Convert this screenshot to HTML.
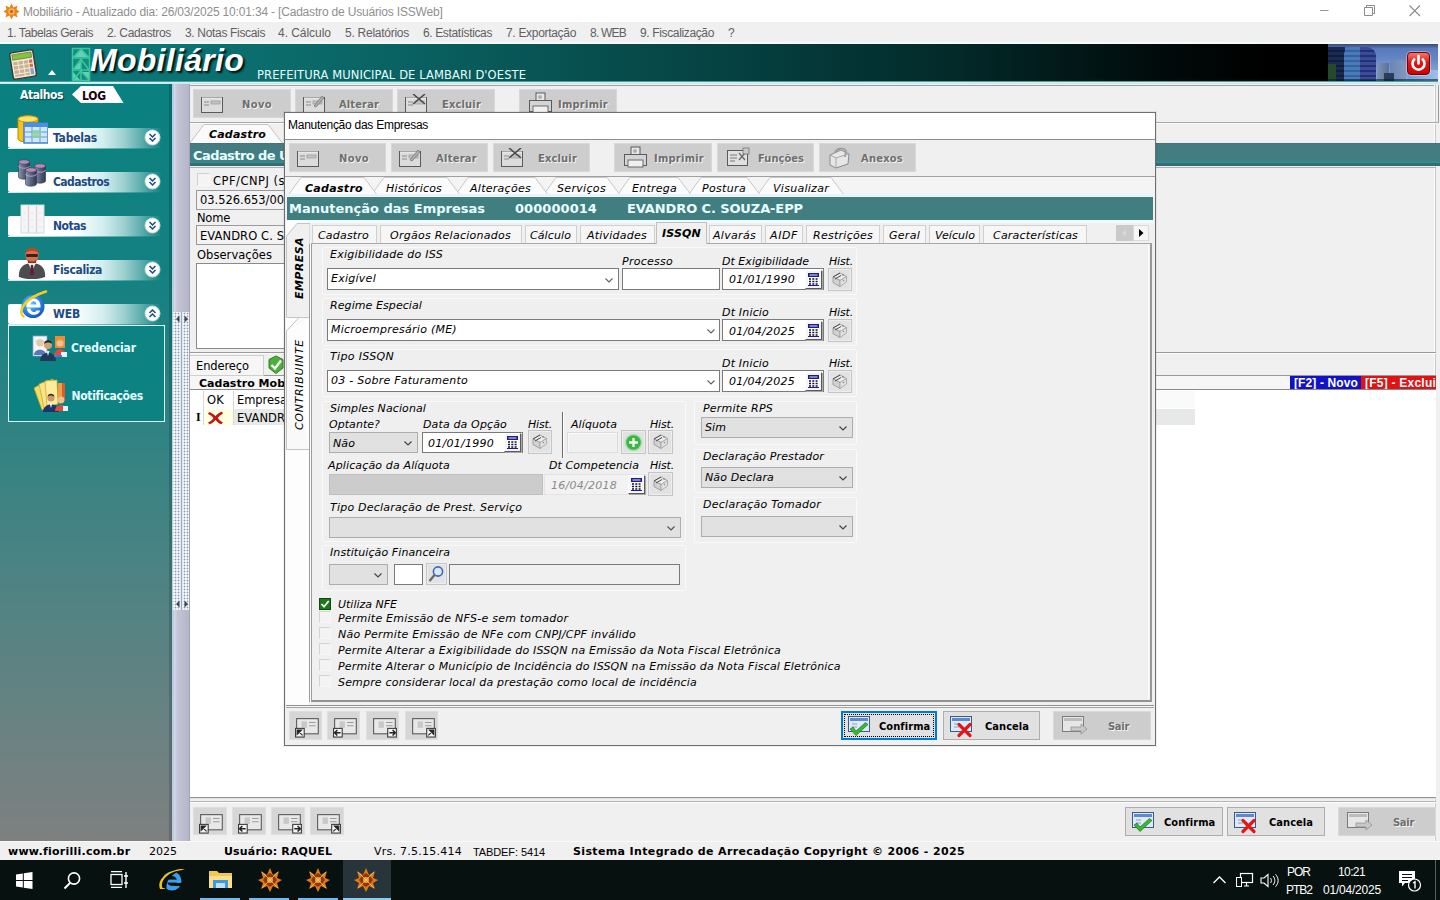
<!DOCTYPE html>
<html lang="pt-BR">
<head>
<meta charset="utf-8">
<title>Mobiliário</title>
<style>
*{box-sizing:border-box;margin:0;padding:0}
html,body{width:1440px;height:900px;overflow:hidden;background:#f0f0f0}
body{position:relative;font-family:"DejaVu Sans","Liberation Sans",sans-serif;font-size:11px;color:#000}
div,svg{position:absolute}
.t{white-space:nowrap;line-height:16px;height:16px}
.ui{font-family:"Liberation Sans",sans-serif;font-size:12px}
.i{font-style:italic}
.b{font-weight:bold}
.cb{font-family:"DejaVu Sans Condensed","DejaVu Sans",sans-serif;font-weight:bold}
.w{color:#fff}
.g{color:#6d6d6d}
.teal{background:#417e80}
.hd{color:#e8ffff;font-weight:bold;font-size:13px}
.tbtn{background:#cdcdcd;border:1px solid #d8d8d8}
.tl{color:#6e6e6e;text-shadow:1px 1px 0 #f4f4f4}
.in{background:#fff;border:1px solid #7a7a7a}
.ing{background:#e1e1e1;border:1px solid #adadad}
.ind{background:#cccccc;border:1px solid #bfbfbf}
.inf{background:#f0f0f0;border:1px solid #7a7a7a}
.hb{background:#e2e2e2;border:1px solid #c4c4c4;box-shadow:inset 0 0 0 1px #ededed}
.tab{background:#f6f6f6;border:1px solid #d0d0d0;border-bottom:none}
.nb{background:#d6d6d6;border:1px solid #dedede}

</style>
</head>
<body>
<div style="left:0px;top:0px;width:1440px;height:22px;background:#fff"></div><svg style="left:3px;top:3px;" width="17" height="17" viewBox="0 0 17 17"><g transform="translate(8.5 8.5)"><path d="M0-8 2-4 6-6 5-2 8 0 5 2 6 6 2 4 0 8-2 4-6 6-5 2-8 0-5-2-6-6-2-4Z" fill="#e8851a"/><circle r="3.2" fill="#f6b45a"/><circle r="1.5" fill="#c65a10"/></g></svg><div class="t ui" style="letter-spacing:-0.18px;left:23px;top:4px;color:#8f8f8f">Mobiliário - Atualizado dia: 26/03/2025 10:01:34 - [Cadastro de Usuários ISSWeb]</div><svg style="left:1318px;top:4px;" width="14" height="14" viewBox="0 0 14 14"><path d="M2 6.5H10.5" stroke="#9a9a9a" stroke-width="1"/></svg><svg style="left:1362px;top:2px;" width="16" height="16" viewBox="0 0 16 16"><path d="M2.5 5.5H10.5V13.5H2.5Z M4.5 5.5V3.5H12.5V11.5H10.5" fill="none" stroke="#8a8a8a" stroke-width="1"/></svg><svg style="left:1407px;top:3px;" width="16" height="16" viewBox="0 0 16 16"><path d="M2.5 2.5L13 13M13 2.5L2.5 13" stroke="#8a8a8a" stroke-width="1.1"/></svg><div style="left:0px;top:22px;width:1440px;height:20px;background:#f1f0f0"></div>
<div class="t ui" style="letter-spacing:-0.42px;left:7px;top:25px;color:#606060">1. Tabelas Gerais</div>
<div class="t ui" style="letter-spacing:-0.34px;left:107px;top:25px;color:#606060">2. Cadastros</div>
<div class="t ui" style="letter-spacing:-0.33px;left:185px;top:25px;color:#606060">3. Notas Fiscais</div>
<div class="t ui" style="letter-spacing:-0.04px;left:278px;top:25px;color:#606060">4. Cálculo</div>
<div class="t ui" style="letter-spacing:-0.26px;left:345px;top:25px;color:#606060">5. Relatórios</div>
<div class="t ui" style="letter-spacing:-0.38px;left:423px;top:25px;color:#606060">6. Estatísticas</div>
<div class="t ui" style="letter-spacing:-0.31px;left:506px;top:25px;color:#606060">7. Exportação</div>
<div class="t ui" style="letter-spacing:-0.78px;left:590px;top:25px;color:#606060">8. WEB</div>
<div class="t ui" style="letter-spacing:-0.36px;left:640px;top:25px;color:#606060">9. Fiscalização</div>
<div class="t ui" style="letter-spacing:-1.69px;left:728px;top:25px;color:#606060">?</div>
<div style="left:0px;top:44px;width:1440px;height:38px;background:linear-gradient(90deg,#0d7f7f 0px,#0c7777 120px,#0a6262 400px,#064444 700px,#032a2a 950px,#010c0c 1150px,#000 1260px)"></div>
<div style="left:0px;top:42px;width:1440px;height:2px;background:#f4fbfa"></div>
<div style="left:0px;top:81px;width:1440px;height:3px;background:linear-gradient(#0a5c5c,#bfeeee 40%,#e6ffff 70%,#9cd4d4)"></div>
<div style="left:1438px;top:43px;width:2px;height:39px;background:#f4f4f4"></div>
<div style="left:1328px;top:44px;width:110px;height:37px;background:linear-gradient(180deg,#5473b4 0%,#6486c6 40%,#7d9fd6 70%,#88a8d8 100%);overflow:hidden"><div style="left:0;top:0;width:110px;height:4px;background:linear-gradient(#3a4a78,#5473b4)"></div>
<div style="left:0;top:3px;width:17px;height:34px;background:repeating-linear-gradient(180deg,#1a2a52 0 3px,#101c3c 3px 5px)"></div>
<div style="left:0;top:20px;width:8px;height:17px;background:#244a2c"></div>
<div style="left:16px;top:3px;width:16px;height:34px;border-radius:7px 0 0 0;background:repeating-linear-gradient(180deg,#4a7ab8 0 3px,#34629e 3px 5px)"></div>
<div style="left:32px;top:3px;width:16px;height:34px;border-radius:0 9px 0 0;background:repeating-linear-gradient(180deg,#3a4c98 0 3px,#242f78 3px 5px)"></div>
<div style="left:49px;top:19px;width:12px;height:18px;background:linear-gradient(90deg,#7f93b4,#5a7096)"></div>
<div style="left:62px;top:16px;width:16px;height:21px;background:linear-gradient(90deg,#6a86b2,#8098be);border-radius:4px 4px 0 0"></div>
<div style="left:56px;top:29px;width:10px;height:8px;background:#2a3c5c"></div>
<div style="left:80px;top:26px;width:30px;height:11px;background:linear-gradient(90deg,#6fa0d4,#9cc0ea)"></div>
<div style="left:0;top:35px;width:110px;height:2px;background:rgba(10,20,40,.55)"></div></div>
<div style="left:1407px;top:52px;width:23px;height:23px;background:linear-gradient(#f47868,#e01818 45%,#d00000);border:1px solid #7a0000;border-radius:4px;box-shadow:0 0 0 1px rgba(255,255,255,.35)"></div><svg style="left:1407px;top:52px;" width="23" height="23" viewBox="0 0 23 23"><path d="M7.2 7.5A6 6 0 1 0 15.8 7.5" fill="none" stroke="#fff" stroke-width="2.6" stroke-linecap="round"/><path d="M11.5 4V11.5" stroke="#fff" stroke-width="2.6" stroke-linecap="round"/></svg><svg style="left:7px;top:48px;" width="32" height="33" viewBox="0 0 30 31"><g transform="rotate(-9 15 15)"><rect x="4" y="3" width="22" height="25" rx="2" fill="#f2ead8" stroke="#3a3a30" stroke-width="1.3"/><rect x="6" y="5" width="18" height="5" fill="#8ac040" stroke="#50702a" stroke-width=".6"/><g fill="#c8b090"><rect x="6" y="12" width="4" height="3"/><rect x="11" y="12" width="4" height="3"/><rect x="16" y="12" width="4" height="3"/><rect x="21" y="12" width="3" height="3" fill="#d07050"/><rect x="6" y="16" width="4" height="3"/><rect x="11" y="16" width="4" height="3"/><rect x="16" y="16" width="4" height="3"/><rect x="21" y="16" width="3" height="3" fill="#d07050"/><rect x="6" y="20" width="4" height="3"/><rect x="11" y="20" width="4" height="3"/><rect x="16" y="20" width="4" height="3"/><rect x="21" y="20" width="3" height="6" fill="#8aa0d0"/><rect x="6" y="24" width="9" height="2"/><rect x="16" y="24" width="4" height="2"/></g></g></svg><svg style="left:47px;top:69px;" width="10" height="7" viewBox="0 0 10 7"><path d="M1 6L5 1L9 6Z" fill="#fff"/></svg><svg style="left:71px;top:47px;" width="20" height="35" viewBox="0 0 20 35"><rect x="1" y="1" width="18" height="33" fill="#1c9a80" opacity=".55"/><g fill="#7fe8c8" opacity=".75"><path d="M2 10L10 2L18 10Z"/><path d="M2 22L10 14V22Z"/><path d="M18 33L10 25H18Z"/><path d="M2 33V25L9 33Z"/></g><g fill="none" stroke="#38c8a0" stroke-width="1.5"><rect x="1.5" y="1.5" width="17" height="32"/><path d="M2 11H18M2 23H18"/><path d="M2 11L10 2L18 11M2 23L10 12L18 23M2 33L10 24L18 33M10 12V33"/></g></svg><div class="t ui b i" style="letter-spacing:0.29px;left:90px;top:42px;font-size:32px;line-height:36px;height:36px;color:#fff;text-shadow:2px 2px 2px rgba(0,0,0,.85)">Mobiliário</div>
<div class="t" style="letter-spacing:0.11px;left:257px;top:67px;color:#e6ffff;font-size:11.5px">PREFEITURA MUNICIPAL DE LAMBARI D'OESTE</div>
<div style="left:0px;top:84px;width:172px;height:758px;background:linear-gradient(180deg,#0a8080 0%,#148181 25%,#2f8383 45%,#4d8383 65%,#6a8282 85%,#7f8080 100%)"></div>
<div class="t cb" style="letter-spacing:-0.43px;left:20px;top:87px;font-size:12px;color:#fff;text-shadow:1px 1px 1px #044">Atalhos</div><svg style="left:71px;top:85px;" width="54" height="19" viewBox="0 0 54 19"><path d="M1 9.5L10 1H42L52.5 18H10Z" fill="#fff"/></svg><div class="t cb" style="letter-spacing:-0.17px;left:82px;top:88px;font-size:12px;color:#200010">LOG</div>
<div style="left:8px;top:128px;width:153px;height:20px;background:linear-gradient(90deg,#fff 0,#fff 42%,#d4eeee 62%,#9ccfcf 76%,#58aaaa 88%,#148282 100%);border-radius:2px 0 0 2px"></div>
<div style="left:8px;top:148px;width:153px;height:1px;background:linear-gradient(90deg,#d0f0f0,#5cb0b0 70%,#0e8080)"></div>
<div class="t cb" style="letter-spacing:-0.22px;left:53px;top:130px;font-size:12px;color:#1c4a84">Tabelas</div><svg style="left:144px;top:129px;" width="17" height="17" viewBox="0 0 17 17"><circle cx="8.5" cy="8.5" r="7.5" fill="#fff" stroke="#bfe0e0" stroke-width="1"/><path d="M5.5 5L8.5 8L11.5 5M5.5 9L8.5 12L11.5 9" fill="none" stroke="#1c4a84" stroke-width="1.5"/></svg><div style="left:8px;top:172px;width:153px;height:20px;background:linear-gradient(90deg,#fff 0,#fff 42%,#d4eeee 62%,#9ccfcf 76%,#58aaaa 88%,#148282 100%);border-radius:2px 0 0 2px"></div>
<div style="left:8px;top:192px;width:153px;height:1px;background:linear-gradient(90deg,#d0f0f0,#5cb0b0 70%,#0e8080)"></div>
<div class="t cb" style="letter-spacing:-0.55px;left:53px;top:174px;font-size:12px;color:#1c4a84">Cadastros</div><svg style="left:144px;top:173px;" width="17" height="17" viewBox="0 0 17 17"><circle cx="8.5" cy="8.5" r="7.5" fill="#fff" stroke="#bfe0e0" stroke-width="1"/><path d="M5.5 5L8.5 8L11.5 5M5.5 9L8.5 12L11.5 9" fill="none" stroke="#1c4a84" stroke-width="1.5"/></svg><div style="left:8px;top:216px;width:153px;height:20px;background:linear-gradient(90deg,#fff 0,#fff 42%,#d4eeee 62%,#9ccfcf 76%,#58aaaa 88%,#148282 100%);border-radius:2px 0 0 2px"></div>
<div style="left:8px;top:236px;width:153px;height:1px;background:linear-gradient(90deg,#d0f0f0,#5cb0b0 70%,#0e8080)"></div>
<div class="t cb" style="letter-spacing:-0.47px;left:53px;top:218px;font-size:12px;color:#1c4a84">Notas</div><svg style="left:144px;top:217px;" width="17" height="17" viewBox="0 0 17 17"><circle cx="8.5" cy="8.5" r="7.5" fill="#fff" stroke="#bfe0e0" stroke-width="1"/><path d="M5.5 5L8.5 8L11.5 5M5.5 9L8.5 12L11.5 9" fill="none" stroke="#1c4a84" stroke-width="1.5"/></svg><div style="left:8px;top:260px;width:153px;height:20px;background:linear-gradient(90deg,#fff 0,#fff 42%,#d4eeee 62%,#9ccfcf 76%,#58aaaa 88%,#148282 100%);border-radius:2px 0 0 2px"></div>
<div style="left:8px;top:280px;width:153px;height:1px;background:linear-gradient(90deg,#d0f0f0,#5cb0b0 70%,#0e8080)"></div>
<div class="t cb" style="letter-spacing:-0.35px;left:53px;top:262px;font-size:12px;color:#1c4a84">Fiscaliza</div><svg style="left:144px;top:261px;" width="17" height="17" viewBox="0 0 17 17"><circle cx="8.5" cy="8.5" r="7.5" fill="#fff" stroke="#bfe0e0" stroke-width="1"/><path d="M5.5 5L8.5 8L11.5 5M5.5 9L8.5 12L11.5 9" fill="none" stroke="#1c4a84" stroke-width="1.5"/></svg><div style="left:8px;top:304px;width:153px;height:20px;background:linear-gradient(90deg,#fff 0,#fff 42%,#d4eeee 62%,#9ccfcf 76%,#58aaaa 88%,#148282 100%);border-radius:2px 0 0 2px"></div>
<div style="left:8px;top:324px;width:153px;height:1px;background:linear-gradient(90deg,#d0f0f0,#5cb0b0 70%,#0e8080)"></div>
<div class="t cb" style="letter-spacing:-0.17px;left:53px;top:306px;font-size:12px;color:#1c4a84">WEB</div><svg style="left:144px;top:305px;" width="17" height="17" viewBox="0 0 17 17"><circle cx="8.5" cy="8.5" r="7.5" fill="#fff" stroke="#bfe0e0" stroke-width="1"/><path d="M5.5 8L8.5 5L11.5 8M5.5 12L8.5 9L11.5 12" fill="none" stroke="#1c4a84" stroke-width="1.5"/></svg><svg style="left:16px;top:111px;" width="32" height="34" viewBox="0 0 32 34"><path d="M2 8C2 4 22 4 22 8V28C22 32 2 32 2 28Z" fill="#f6c21c" stroke="#b88a00"/><ellipse cx="12" cy="8" rx="10" ry="3.2" fill="#ffe268" stroke="#c89a00"/><rect x="8" y="12" width="24" height="20" fill="#cfe8ff" stroke="#3a7ac8" stroke-width="1.4"/><rect x="8" y="12" width="24" height="4" fill="#4a90e0"/><path d="M8 21H32M8 26H32M16 16V32M24 16V32" stroke="#5a9adc" stroke-width="1"/><rect x="16" y="19" width="9" height="8" fill="#8fd0a0" opacity=".8"/></svg><svg style="left:16px;top:158px;" width="34" height="30" viewBox="0 0 34 30"><defs><linearGradient id="cg" x1="0" x2="1"><stop offset="0" stop-color="#8a98b4"/><stop offset=".5" stop-color="#56627e"/><stop offset="1" stop-color="#2e3850"/></linearGradient></defs><path d="M2.5 4V19A5.5 2.2 0 0 0 13.5 19V4Z" fill="url(#cg)" stroke="#2a3448" stroke-width=".6"/><ellipse cx="8" cy="4" rx="5.5" ry="2.2" fill="#b88ab8" stroke="#3a4458" stroke-width=".6"/><path d="M2.5 8A5.5 2.2 0 0 0 13.5 8" fill="none" stroke="#c8a0d0" stroke-width=".9"/><path d="M18.5 8V23A5.5 2.2 0 0 0 29.5 23V8Z" fill="url(#cg)" stroke="#2a3448" stroke-width=".6"/><ellipse cx="24" cy="8" rx="5.5" ry="2.2" fill="#b88ab8" stroke="#3a4458" stroke-width=".6"/><path d="M18.5 12A5.5 2.2 0 0 0 29.5 12" fill="none" stroke="#c8a0d0" stroke-width=".9"/><path d="M9.5 12V26A5.5 2.2 0 0 0 20.5 26V12Z" fill="url(#cg)" stroke="#2a3448" stroke-width=".6"/><ellipse cx="15" cy="12" rx="5.5" ry="2.2" fill="#b88ab8" stroke="#3a4458" stroke-width=".6"/><path d="M9.5 16A5.5 2.2 0 0 0 20.5 16" fill="none" stroke="#c8a0d0" stroke-width=".9"/></svg><svg style="left:20px;top:204px;" width="26" height="30" viewBox="0 0 26 30"><rect x="1" y="1" width="23" height="28" fill="#f4f6f6" stroke="#d0dcdc"/><path d="M8.5 2V29M16.5 2V29" stroke="#e8c8d0" stroke-width="1.2"/><path d="M1 9H24M1 16H24M1 23H24" stroke="#e4ecec"/></svg><svg style="left:17px;top:245px;" width="30" height="34" viewBox="0 0 30 34"><path d="M2 32C1 22 8 18 15 18C22 18 29 22 28 32C20 35 10 35 2 32Z" fill="#4c4c50"/><path d="M11 18L15 26L19 18Z" fill="#e8e8e8"/><path d="M14 20H16L17 29L15 31L13 29Z" fill="#5a2030"/><ellipse cx="15" cy="10.5" rx="6.6" ry="7.8" fill="#d8704a"/><path d="M8.5 8C8 1 22 1 21.5 8C19 5 11 5 8.5 8Z" fill="#b04a28"/><rect x="9" y="9" width="12" height="3" rx="1.2" fill="#3a2020"/><path d="M11 15C13 17 17 17 19 15V18H11Z" fill="#7a3a28"/></svg><svg style="left:17px;top:289px;" width="32" height="33" viewBox="0 0 32 33"><defs><radialGradient id="ieg" cx=".4" cy=".35" r=".75"><stop offset="0" stop-color="#6ccaf8"/><stop offset=".55" stop-color="#2a84e0"/><stop offset="1" stop-color="#1648a8"/></radialGradient></defs><circle cx="16" cy="17.5" r="11.5" fill="url(#ieg)"/><path d="M9.5 18.5H23.5C24 12 20 9.5 16.5 9.5C12 9.5 9 13 9.5 18.5ZM13.5 15.5C13.8 13.2 15 12.2 16.5 12.2C18.2 12.2 19.3 13.4 19.5 15.5ZM9.8 19.5C10.5 24 14 25.8 17 25.8C20 25.8 22.3 24.2 23.2 21.5H19.3C18.8 22.5 18 23 16.8 23C15 23 13.7 21.8 13.5 19.5Z" fill="#fff"/><path d="M6.5 27.5C0 22 8 9 29 2.5" fill="none" stroke="#f4cc28" stroke-width="2.6" stroke-linecap="round"/></svg><div style="left:8px;top:325px;width:157px;height:97px;border:1px solid #e6ffff;background:#0c8282"></div>
<div class="t cb" style="letter-spacing:-0.1px;left:71px;top:340px;color:#e4ffff;font-size:12px">Credenciar</div>
<div class="t cb" style="letter-spacing:-0.3px;left:71.5px;top:388px;color:#e4ffff;font-size:12px">Notificações</div><svg style="left:32px;top:335px;" width="36" height="27" viewBox="0 0 36 27"><rect x="1" y="1" width="14" height="20" fill="#f4f6fc" stroke="#8aa0d0" stroke-width=".8"/><circle cx="8" cy="8" r="3.6" fill="#e8c8a0"/><path d="M3 8C3 3 13 3 13 8C11 5 5 5 3 8Z" fill="#d8d0c0"/><path d="M2 20C2 13 14 13 14 20Z" fill="#5a78b8"/><circle cx="16" cy="10" r="4" fill="#d8a070"/><path d="M12 9C12 4 20 4 20 9C18 7 14 7 12 9Z" fill="#2a2018"/><path d="M8 26C8 15 24 15 24 26Z" fill="#1c3a5a"/><path d="M14.5 16L16 21L17.5 16Z" fill="#e8e8e8"/><rect x="23" y="1" width="10" height="12" fill="#f08838"/><circle cx="28" cy="8" r="3.6" fill="#f0c090"/><path d="M24.5 7C24.5 2.5 31.5 2.5 31.5 7C30 5 26 5 24.5 7Z" fill="#e8a030"/><path d="M22 21C22 12 34 12 34 21Z" fill="#e04a3a"/><rect x="29" y="17" width="6" height="5" fill="#e8f0ff"/><rect x="22" y="20" width="8" height="2" fill="#4a78d0"/></svg><svg style="left:32px;top:377px;" width="38" height="36" viewBox="0 0 38 36"><g stroke="#c8a020" stroke-width=".7"><path d="M2 11L16 3L24 27L10 33Z" fill="#f4dc6a"/><path d="M7 7L21 2L25 27L12 31Z" fill="#f8e488"/><path d="M13 4L25 3L26 27L15 29Z" fill="#fcec9c"/></g><rect x="26" y="6" width="6" height="18" fill="#f0a040"/><rect x="30" y="6" width="3" height="18" fill="#e05a30"/><circle cx="19" cy="21" r="3.6" fill="#c89a70"/><path d="M15.5 20C15.5 15.5 22.5 15.5 22.5 20C21 18 17 18 15.5 20Z" fill="#3a2a1a"/><path d="M11 35C11 25 27 25 27 35Z" fill="#1c3468"/><path d="M17.5 26L19 31L20.5 26Z" fill="#f0f0f0"/><circle cx="29" cy="23" r="3.4" fill="#f0c090"/><path d="M23 34C23 26 35 26 35 34Z" fill="#e04a3a"/><rect x="31" y="29" width="5" height="5" fill="#e8f0ff"/></svg><div style="left:169px;top:84px;width:3px;height:758px;background:rgba(0,0,0,.16)"></div>
<div style="left:172px;top:84px;width:18px;height:758px;background:linear-gradient(90deg,#e6e6f0 0,#c4c4d6 30%,#b4b4c8 100%)"></div>
<div style="left:172px;top:84px;width:2px;height:758px;background:#b4cce4"></div>
<div style="left:173px;top:312px;width:17px;height:298px;background-color:#f2f7fb;background-image:radial-gradient(#8a9ab4 0.8px,transparent 1.1px);background-size:3px 3px;background-position:1px 0"></div>
<div style="left:180px;top:312px;width:3px;height:298px;background:#e4eaf2"></div>
<div style="left:181px;top:312px;width:1px;height:298px;background:#9aa8bc"></div><svg style="left:175px;top:315px;" width="14" height="8" viewBox="0 0 14 8"><path d="M4.5 0.5V7.5L1 4Z M9.5 0.5V7.5L13 4Z" fill="#3a4656"/></svg><svg style="left:175px;top:600px;" width="14" height="8" viewBox="0 0 14 8"><path d="M4.5 0.5V7.5L1 4Z M9.5 0.5V7.5L13 4Z" fill="#3a4656"/></svg><div style="left:189px;top:84px;width:1px;height:758px;background:#a4a4b4"></div>
<div style="left:190px;top:84px;width:1246px;height:758px;background:#f0f0f0"></div>
<div style="left:190px;top:85px;width:1246px;height:1px;background:#a0a0a0"></div>
<div style="left:1434px;top:84px;width:1px;height:758px;background:#fbfbfb"></div>
<div style="left:1436px;top:84px;width:4px;height:758px;background:#f0f0f0"></div>
<div style="left:1435px;top:84px;width:1px;height:758px;background:#c8c8c8"></div>
<div class="tbtn" style="left:193px;top:89px;width:98px;height:29px;"></div>
<div class="t cb tl" style="letter-spacing:0.41px;left:242px;top:97px;">Novo</div><svg style="left:200px;top:94px;" width="24" height="20" viewBox="0 0 24 20"><rect x="1.5" y="3.5" width="21" height="15" fill="#dcdcdc" stroke="#5a5a5a"/><path d="M4 8H9M4 11H9" stroke="#8a8a8a"/><rect x="11" y="7" width="9" height="3" fill="#c4c4c4" stroke="#909090" stroke-width=".6"/><path d="M2 4H22" stroke="#f4f4f4"/></svg><div class="tbtn" style="left:295px;top:89px;width:98px;height:29px;"></div>
<div class="t cb tl" style="letter-spacing:0.15px;left:339px;top:97px;">Alterar</div><svg style="left:302px;top:94px;" width="24" height="20" viewBox="0 0 24 20"><rect x="1.5" y="3.5" width="21" height="15" fill="#dcdcdc" stroke="#5a5a5a"/><path d="M4 8H9M4 11H9" stroke="#8a8a8a"/><rect x="11" y="7" width="9" height="3" fill="#c4c4c4" stroke="#909090" stroke-width=".6"/><path d="M2 4H22" stroke="#f4f4f4"/><path d="M12 12L20 2L22 4L14 13Z" fill="#b0b0b0" stroke="#6a6a6a" stroke-width=".7"/></svg><div class="tbtn" style="left:397px;top:89px;width:98px;height:29px;"></div>
<div class="t cb tl" style="letter-spacing:0.18px;left:442px;top:97px;">Excluir</div><svg style="left:404px;top:94px;" width="24" height="20" viewBox="0 0 24 20"><rect x="1.5" y="3.5" width="21" height="15" fill="#dcdcdc" stroke="#5a5a5a"/><path d="M4 8H9M4 11H9" stroke="#8a8a8a"/><rect x="11" y="7" width="9" height="3" fill="#c4c4c4" stroke="#909090" stroke-width=".6"/><path d="M2 4H22" stroke="#f4f4f4"/><path d="M9 0L21 10M21 0L9 10" stroke="#4a4a4a" stroke-width="1.6"/></svg><div class="tbtn" style="left:519px;top:89px;width:98px;height:29px;"></div>
<div class="t cb tl" style="letter-spacing:0.26px;left:558px;top:97px;">Imprimir</div><svg style="left:528px;top:92px;" width="26" height="24" viewBox="0 0 26 24"><rect x="8" y="1" width="9" height="8" fill="#e8e8e8" stroke="#5a5a5a"/><rect x="1.5" y="8.5" width="22" height="11" fill="#d4d4d4" stroke="#5a5a5a"/><rect x="5" y="14" width="15" height="7" fill="#f0f0f0" stroke="#6a6a6a"/><circle cx="12" cy="5" r="2" fill="#b0b0b0"/></svg><div style="left:1438px;top:85px;width:1px;height:38px;background:#9a9a9a"></div>
<div style="left:190px;top:122px;width:1249px;height:1px;background:#a8a8a8"></div>
<div style="left:190px;top:123px;width:1246px;height:1px;background:#fbfbfb"></div><svg style="left:190px;top:124px;" width="100" height="19" viewBox="0 0 100 19"><path d="M0 19L14 0.5H78L92.5 19" fill="#fafafa" stroke="#c4c4c4"/></svg><div class="t b i" style="letter-spacing:0.18px;left:209px;top:127px;">Cadastro</div>
<div style="left:190px;top:143px;width:1250px;height:23px;background:linear-gradient(#4a6a6a 0,#437d82 1px,#437d82 18px,#2f8f90 18px,#2f8f90 20px,#3a6c76 20px)"></div>
<div style="left:190px;top:167px;width:1246px;height:1px;background:#b0b0b0"></div>
<div class="t hd" style="letter-spacing:-0.57px;left:193px;top:148px;">Cadastro de U</div>
<div style="left:197px;top:173px;width:13px;height:13px;border:1px solid #d0d0d0;border-right-color:#f8f8f8;border-bottom-color:#f8f8f8;background:#f4f4f4"></div>
<div class="t" style="letter-spacing:0.5px;left:213px;top:173px;font-size:11.5px">CPF/CNPJ (s</div>
<div style="left:196px;top:190px;width:100px;height:20px;background:#f2f2f2;border:1px solid #9a9a9a"></div>
<div class="t" style="letter-spacing:-0.03px;left:200px;top:192px;font-size:11.5px">03.526.653/00</div>
<div class="t" style="letter-spacing:-0.23px;left:197px;top:210px;font-size:11.5px">Nome</div>
<div style="left:196px;top:225px;width:100px;height:20px;background:#f2f2f2;border:1px solid #9a9a9a"></div>
<div class="t" style="letter-spacing:0.08px;left:200px;top:228px;font-size:11.5px">EVANDRO C. S</div>
<div class="t" style="letter-spacing:0.05px;left:197px;top:247px;font-size:11.5px">Observações</div>
<div style="left:196px;top:263px;width:100px;height:86px;background:#fff;border:1px solid #8a8a8a"></div>
<div style="left:190px;top:352px;width:1246px;height:1px;background:#9a9a9a"></div>
<div style="left:190px;top:353px;width:1246px;height:1px;background:#fcfcfc"></div>
<div style="left:190px;top:355px;width:74px;height:21px;background:#f6f6f6;border:1px solid #cfcfcf;border-left:none"></div>
<div class="t" style="letter-spacing:-0.11px;left:196px;top:358px;font-size:11.5px">Endereço</div><svg style="left:266px;top:355px;" width="20" height="20" viewBox="0 0 20 20"><path d="M10 1L17 4.5V13L10 18.5L3 13V4.5Z" fill="#4caf3a" stroke="#2e7d20"/><path d="M5.5 10L9 13.5L15 5.5" fill="none" stroke="#fff" stroke-width="2.4"/></svg><div style="left:264px;top:375px;width:1172px;height:1px;background:#9a9a9a"></div>
<div style="left:190px;top:376px;width:1246px;height:13px;background:#f6f6f6"></div>
<div class="t b" style="letter-spacing:0.02px;left:199px;top:376px;">Cadastro Mob</div>
<div style="left:1290px;top:376px;width:71px;height:13px;background:#1212c6"></div>
<div style="left:1361px;top:376px;width:75px;height:13px;background:#e01212;overflow:hidden"></div>
<div class="t ui b w" style="letter-spacing:0.12px;left:1294px;top:375px;">[F2] - Novo</div>
<div class="t ui b w" style="letter-spacing:0.23px;left:1365px;top:375px;">[F5] - Exclui</div>
<div style="left:190px;top:389px;width:1246px;height:1px;background:#8a8a8a"></div>
<div style="left:190px;top:390px;width:1246px;height:407px;background:#fff"></div>
<div style="left:203px;top:391px;width:1px;height:34px;background:#d8d8d8"></div>
<div style="left:233px;top:391px;width:1px;height:34px;background:#d8d8d8"></div>
<div class="t" style="letter-spacing:0.2px;left:207px;top:392px;font-size:11.5px">OK</div>
<div class="t" style="letter-spacing:-0.05px;left:237px;top:392px;font-size:11.5px">Empresa</div>
<div style="left:204px;top:409px;width:29px;height:16px;background:#ffffe1"></div>
<div style="left:234px;top:409px;width:961px;height:16px;background:#e6e9e7"></div>
<div style="left:1155px;top:391px;width:40px;height:17px;background:#fafafa"></div>
<div class="t" style="left:196px;top:409px;font-family:'Liberation Serif',serif;font-size:12px;font-weight:bold">I</div><svg style="left:207px;top:410px;" width="17" height="15" viewBox="0 0 17 15"><path d="M2 2.5C5 3 7 5 8.5 6.5C10 4.5 12 3 15 2L15.5 3.5C13 5 11.5 6.5 10.5 8C12 10 13.5 11.5 15.5 12.5L14 14C12 13 10 11.5 8.5 9.5C7 11.5 5 13 2.5 14L1.5 12.5C4 11.5 5.5 10 6.8 8C5.5 6.5 4 5 1.5 4Z" fill="#d01010" stroke="#7a0000" stroke-width=".5"/></svg><div class="t" style="letter-spacing:0.05px;left:237px;top:410px;font-size:11.5px">EVANDR</div>
<div style="left:190px;top:797px;width:1246px;height:2px;background:#959595"></div>
<div style="left:190px;top:798px;width:1246px;height:1px;background:#e0e0e0"></div>
<div style="left:190px;top:801px;width:1246px;height:1px;background:#b4b4b4"></div>
<div style="left:190px;top:802px;width:1246px;height:1px;background:#fdfdfd"></div>
<div class="nb" style="left:193px;top:807px;width:34px;height:28px;"></div><svg style="left:199px;top:813px;" width="26" height="21.7" viewBox="0 0 24 20"><rect x="1.5" y="1.5" width="20" height="14" fill="#e8e8e8" stroke="#5a5a5a"/><rect x="6" y="4" width="5" height="6" fill="#c8c8c8"/><path d="M13 5H19M13 8H19" stroke="#9a9a9a"/><rect x="0.5" y="10.5" width="8" height="8" fill="#f4f4f4" stroke="#3a3a3a"/><path d="M2 12H6L2 16Z M3 13L7 17" fill="#222" stroke="#222"/></svg><div class="nb" style="left:232px;top:807px;width:34px;height:28px;"></div><svg style="left:238px;top:813px;" width="26" height="21.7" viewBox="0 0 24 20"><rect x="1.5" y="1.5" width="20" height="14" fill="#e8e8e8" stroke="#5a5a5a"/><rect x="6" y="4" width="5" height="6" fill="#c8c8c8"/><path d="M13 5H19M13 8H19" stroke="#9a9a9a"/><rect x="0.5" y="10.5" width="8" height="8" fill="#f4f4f4" stroke="#3a3a3a"/><path d="M7 14.5H2M4 12L1.5 14.5L4 17" fill="none" stroke="#222" stroke-width="1.4"/></svg><div class="nb" style="left:271px;top:807px;width:34px;height:28px;"></div><svg style="left:277px;top:813px;" width="26" height="21.7" viewBox="0 0 24 20"><rect x="1.5" y="1.5" width="20" height="14" fill="#e8e8e8" stroke="#5a5a5a"/><rect x="6" y="4" width="5" height="6" fill="#c8c8c8"/><path d="M13 5H19M13 8H19" stroke="#9a9a9a"/><rect x="14.5" y="10.5" width="8" height="8" fill="#f4f4f4" stroke="#3a3a3a"/><path d="M16 14.5H21M19 12L21.5 14.5L19 17" fill="none" stroke="#222" stroke-width="1.4"/></svg><div class="nb" style="left:310px;top:807px;width:34px;height:28px;"></div><svg style="left:316px;top:813px;" width="26" height="21.7" viewBox="0 0 24 20"><rect x="1.5" y="1.5" width="20" height="14" fill="#e8e8e8" stroke="#5a5a5a"/><rect x="6" y="4" width="5" height="6" fill="#c8c8c8"/><path d="M13 5H19M13 8H19" stroke="#9a9a9a"/><rect x="14.5" y="10.5" width="8" height="8" fill="#f4f4f4" stroke="#3a3a3a"/><path d="M21 12H17L21 16Z M20 13L16 17" fill="#222" stroke="#222"/></svg><div style="left:1125px;top:807px;width:98px;height:29px;background:#e1e1e1;border:1px solid #adadad"></div>
<div class="t cb" style="letter-spacing:0.08px;left:1164px;top:815px;">Confirma</div><svg style="left:1131px;top:811px;" width="26" height="22" viewBox="0 0 26 22"><rect x="1.5" y="1.5" width="21" height="15" fill="#dfeaf6" stroke="#3a5a8a"/><rect x="3" y="3" width="18" height="3" fill="#5a8ad0"/><path d="M5 9H10M5 12H10" stroke="#8aa0c0"/><path d="M3 14L9 20.5L21 9.5L18.5 7.5L9 16L6 12Z" fill="#3cb43c" stroke="#1e7a1e" stroke-width=".7"/></svg><div style="left:1227px;top:807px;width:98px;height:29px;background:#e1e1e1;border:1px solid #adadad"></div>
<div class="t cb" style="letter-spacing:0.05px;left:1269px;top:815px;">Cancela</div><svg style="left:1233px;top:811px;" width="28" height="23" viewBox="0 0 28 23"><rect x="1.5" y="1.5" width="21" height="15" fill="#dfeaf6" stroke="#3a5a8a"/><rect x="3" y="3" width="18" height="3" fill="#5a8ad0"/><path d="M5 9H10M5 12H10" stroke="#8aa0c0"/><path d="M10 9.5L21 20.5M21 9.5L10 20.5" stroke="#e01818" stroke-width="3.2" stroke-linecap="round"/></svg><div style="left:1338px;top:807px;width:98px;height:29px;background:#cdcdcd;border:1px solid #d8d8d8"></div>
<div class="t cb tl" style="letter-spacing:-0.27px;left:1393px;top:815px;">Sair</div><svg style="left:1346px;top:811px;" width="28" height="23" viewBox="0 0 28 23"><rect x="1.5" y="1.5" width="21" height="15" fill="#e6e6e6" stroke="#7a7a7a"/><rect x="3" y="3" width="18" height="3" fill="#bcbcbc"/><path d="M10 12H20V9L26 14L20 19V16H10Z" fill="#c8c8c8" stroke="#8a8a8a" stroke-width=".7"/></svg><div style="left:0px;top:841px;width:1440px;height:19px;background:#f0f0f0;border-top:1px solid #fafafa"></div>
<div class="t b" style="letter-spacing:0.24px;left:8px;top:844px;">www.fiorilli.com.br</div>
<div class="t" style="left:149px;top:844px;">2025</div>
<div class="t b" style="letter-spacing:0.17px;left:224px;top:844px;">Usuário: RAQUEL</div>
<div class="t" style="letter-spacing:0.25px;left:374px;top:844px;">Vrs. 7.5.15.414</div>
<div class="t ui" style="letter-spacing:-0.1px;left:473px;top:844px;font-size:11px">TABDEF: 5414</div>
<div class="t b" style="letter-spacing:0.36px;left:573px;top:844px;">Sistema Integrado de Arrecadação Copyright © 2006 - 2025</div>
<div style="left:0px;top:860px;width:1440px;height:40px;background:#07110f"></div><svg style="left:16px;top:872px;" width="17" height="17" viewBox="0 0 17 17"><path d="M0 2.4L6.8 1.4V8H0ZM7.8 1.3L16.5 0V8H7.8ZM0 9H6.8V15.6L0 14.6ZM7.8 9H16.5V17L7.8 15.7Z" fill="#fff"/></svg><svg style="left:63px;top:871px;" width="19" height="19" viewBox="0 0 19 19"><circle cx="11" cy="7.5" r="5.6" fill="none" stroke="#fff" stroke-width="1.6"/><path d="M7 12L1.5 17.5" stroke="#fff" stroke-width="2"/></svg><svg style="left:110px;top:871px;" width="20" height="18" viewBox="0 0 20 18"><rect x="1" y="3.5" width="11" height="10" fill="none" stroke="#fff" stroke-width="1.3"/><path d="M1 0.7H12M1 16.3H12" stroke="#fff" stroke-width="1.3"/><path d="M16 1V17" stroke="#fff" stroke-width="1.4"/><path d="M14 5H18M14 12H18" stroke="#fff" stroke-width="1.3"/></svg><svg style="left:158px;top:867px;" width="28" height="26" viewBox="0 0 28 26"><circle cx="14" cy="14" r="9.5" fill="#3aa0ee"/><circle cx="14" cy="14" r="5" fill="#07110f"/><rect x="5" y="12.6" width="18" height="3" fill="#3aa0ee"/><path d="M16 16H24V19H16Z" fill="#07110f"/><path d="M2 22C-2 12 12 1 27 2C19 4 6 11 7 22Z" fill="#f2c21c"/><path d="M4.5 21C1.5 13 12 4 23 3.2C16 6 7.5 12 8.5 21.5Z" fill="#07110f"/></svg><svg style="left:208px;top:868px;" width="25" height="22" viewBox="0 0 25 22"><path d="M1 3H9L11 5H24V20H1Z" fill="#f6c84a"/><rect x="1" y="8" width="23" height="12" fill="#fbe08a"/><rect x="5" y="12" width="15" height="8" fill="#3a9ae6"/><rect x="8" y="15" width="9" height="5" fill="#bfe2fb"/></svg><div style="left:343px;top:860px;width:48px;height:40px;background:#27353a"></div><svg style="left:257px;top:867px;" width="26" height="26" viewBox="0 0 26 26"><g transform="translate(13 13)"><path d="M0-12 3-5 9-9 7-2 12 0 7 3 9 9 3 6 0 12-3 6-9 9-7 3-12 0-7-2-9-9-3-5Z" fill="#e07a1a"/><path d="M0-7 4-4 7 0 4 4 0 7-4 4-7 0-4-4Z" fill="#8a3a08"/><circle r="3" fill="#f6a040"/><path d="M-8-8L8 8M8-8L-8 8" stroke="#f8c070" stroke-width=".8"/></g></svg><svg style="left:305px;top:867px;" width="26" height="26" viewBox="0 0 26 26"><g transform="translate(13 13)"><path d="M0-12 3-5 9-9 7-2 12 0 7 3 9 9 3 6 0 12-3 6-9 9-7 3-12 0-7-2-9-9-3-5Z" fill="#e07a1a"/><path d="M0-7 4-4 7 0 4 4 0 7-4 4-7 0-4-4Z" fill="#8a3a08"/><circle r="3" fill="#f6a040"/><path d="M-8-8L8 8M8-8L-8 8" stroke="#f8c070" stroke-width=".8"/></g></svg><svg style="left:353px;top:867px;" width="26" height="26" viewBox="0 0 26 26"><g transform="translate(13 13)"><path d="M0-12 3-5 9-9 7-2 12 0 7 3 9 9 3 6 0 12-3 6-9 9-7 3-12 0-7-2-9-9-3-5Z" fill="#e07a1a"/><path d="M0-7 4-4 7 0 4 4 0 7-4 4-7 0-4-4Z" fill="#8a3a08"/><circle r="3" fill="#f6a040"/><path d="M-8-8L8 8M8-8L-8 8" stroke="#f8c070" stroke-width=".8"/></g></svg><div style="left:200px;top:898px;width:40px;height:2px;background:#76b9ed"></div>
<div style="left:249px;top:898px;width:40px;height:2px;background:#76b9ed"></div>
<div style="left:298px;top:898px;width:40px;height:2px;background:#76b9ed"></div>
<div style="left:343px;top:898px;width:48px;height:2px;background:#8ccaf6"></div><svg style="left:1212px;top:874px;" width="15" height="12" viewBox="0 0 15 12"><path d="M1.5 9L7.5 3L13.5 9" fill="none" stroke="#fff" stroke-width="1.3"/></svg><svg style="left:1236px;top:872px;" width="18" height="17" viewBox="0 0 18 17"><rect x="4.5" y="1.5" width="12" height="9" fill="none" stroke="#fff" stroke-width="1.2"/><path d="M8 14H13M10.5 10.5V14" stroke="#fff" stroke-width="1.2"/><rect x="0.5" y="5.5" width="5" height="9" fill="#07110f" stroke="#fff" stroke-width="1"/></svg><svg style="left:1260px;top:872px;" width="19" height="17" viewBox="0 0 19 17"><path d="M1 6H4L8 2.5V14.5L4 11H1Z" fill="none" stroke="#fff" stroke-width="1.1"/><path d="M10.5 6C11.7 7.5 11.7 9.5 10.5 11M13 4C15.4 6.6 15.4 10.4 13 13M15.5 2.3C19 6 19 11 15.5 14.7" fill="none" stroke="#fff" stroke-width="1"/></svg><div class="t ui w" style="letter-spacing:-1.01px;left:1287px;top:864px;">POR</div>
<div class="t ui w" style="letter-spacing:-1.0px;left:1286px;top:882px;">PTB2</div>
<div class="t ui w" style="letter-spacing:-0.61px;left:1338px;top:864px;">10:21</div>
<div class="t ui w" style="letter-spacing:-0.21px;left:1323px;top:882px;">01/04/2025</div><svg style="left:1397px;top:869px;" width="26" height="24" viewBox="0 0 26 24"><path d="M2 2H18V14H8L5 17.5V14H2Z" fill="#fff"/><path d="M5 5.5H15M5 8.5H15M5 11.5H11" stroke="#07110f" stroke-width="1.2"/><circle cx="17.5" cy="16" r="6" fill="#07110f" stroke="#fff" stroke-width="1.2"/><path d="M16 14L18 12.8V19.5" fill="none" stroke="#fff" stroke-width="1.4"/></svg><div style="left:284px;top:112px;width:872px;height:634px;background:#f0f0f0;border:1px solid #6e6e6e;box-shadow:0 0 0 1px rgba(0,0,0,.06)"></div>
<div style="left:285px;top:113px;width:870px;height:26px;background:#fff"></div>
<div class="t ui" style="letter-spacing:-0.26px;left:288px;top:117px;">Manutenção das Empresas</div>
<div style="left:285px;top:139px;width:870px;height:1px;background:#8e8e8e"></div>
<div class="tbtn" style="left:289px;top:143px;width:97px;height:29px;"></div>
<div class="t cb tl" style="letter-spacing:0.41px;left:339px;top:151px;">Novo</div><svg style="left:296px;top:148px;" width="24" height="20" viewBox="0 0 24 20"><rect x="1.5" y="3.5" width="21" height="15" fill="#dcdcdc" stroke="#5a5a5a"/><path d="M4 8H9M4 11H9" stroke="#8a8a8a"/><rect x="11" y="7" width="9" height="3" fill="#c4c4c4" stroke="#909090" stroke-width=".6"/><path d="M2 4H22" stroke="#f4f4f4"/></svg><div class="tbtn" style="left:391px;top:143px;width:97px;height:29px;"></div>
<div class="t cb tl" style="letter-spacing:0.29px;left:436px;top:151px;">Alterar</div><svg style="left:398px;top:148px;" width="24" height="20" viewBox="0 0 24 20"><rect x="1.5" y="3.5" width="21" height="15" fill="#dcdcdc" stroke="#5a5a5a"/><path d="M4 8H9M4 11H9" stroke="#8a8a8a"/><rect x="11" y="7" width="9" height="3" fill="#c4c4c4" stroke="#909090" stroke-width=".6"/><path d="M2 4H22" stroke="#f4f4f4"/><path d="M12 12L20 2L22 4L14 13Z" fill="#b0b0b0" stroke="#6a6a6a" stroke-width=".7"/></svg><div class="tbtn" style="left:493px;top:143px;width:97px;height:29px;"></div>
<div class="t cb tl" style="letter-spacing:0.18px;left:538px;top:151px;">Excluir</div><svg style="left:500px;top:148px;" width="24" height="20" viewBox="0 0 24 20"><rect x="1.5" y="3.5" width="21" height="15" fill="#dcdcdc" stroke="#5a5a5a"/><path d="M4 8H9M4 11H9" stroke="#8a8a8a"/><rect x="11" y="7" width="9" height="3" fill="#c4c4c4" stroke="#909090" stroke-width=".6"/><path d="M2 4H22" stroke="#f4f4f4"/><path d="M9 0L21 10M21 0L9 10" stroke="#4a4a4a" stroke-width="1.6"/></svg><div class="tbtn" style="left:614px;top:143px;width:98px;height:29px;"></div>
<div class="t cb tl" style="letter-spacing:0.26px;left:654px;top:151px;">Imprimir</div><svg style="left:623px;top:146px;" width="26" height="24" viewBox="0 0 26 24"><rect x="8" y="1" width="9" height="8" fill="#e8e8e8" stroke="#5a5a5a"/><rect x="1.5" y="8.5" width="22" height="11" fill="#d4d4d4" stroke="#5a5a5a"/><rect x="5" y="14" width="15" height="7" fill="#f0f0f0" stroke="#6a6a6a"/><circle cx="12" cy="5" r="2" fill="#b0b0b0"/></svg><div class="tbtn" style="left:717px;top:143px;width:97px;height:29px;"></div>
<div class="t cb tl" style="letter-spacing:0.06px;left:758px;top:151px;">Funções</div><svg style="left:726px;top:147px;" width="26" height="22" viewBox="0 0 26 22"><rect x="1.5" y="3.5" width="20" height="15" fill="#e0e0e0" stroke="#5a5a5a"/><path d="M4 8H11M4 11H11M4 14H9" stroke="#7a7a7a"/><path d="M13 6L19 13M19 6L13 13" stroke="#6a6a6a" stroke-width="1.3"/><rect x="17" y="1" width="6" height="6" fill="#c8c8c8" stroke="#6a6a6a" stroke-width=".7"/></svg><div class="tbtn" style="left:819px;top:143px;width:97px;height:29px;"></div>
<div class="t cb tl" style="letter-spacing:0.25px;left:861px;top:151px;">Anexos</div><svg style="left:827px;top:146px;" width="26" height="24" viewBox="0 0 26 24"><path d="M3 9L14 4L22 8L21 18L9 22L3 19Z" fill="#e6e6e6" stroke="#8a8a8a"/><path d="M8 7C9 2 17 1 19 5L18 11" fill="none" stroke="#9a9a9a" stroke-width="1.6"/><path d="M3 9L9 12L21 8M9 12V22" fill="none" stroke="#a8a8a8"/></svg><div style="left:285px;top:176px;width:870px;height:1px;background:#a0a0a0"></div>
<div style="left:285px;top:177px;width:870px;height:20px;background:#f4f4f4"></div><svg style="left:757px;top:176px;" width="88" height="20" viewBox="0 0 88 20"><path d="M0 19.5L13 1.5H74L87.5 19.5" fill="#fbfbfb" stroke="#c8c8c8"/></svg><div class="t i" style="letter-spacing:0.28px;left:773px;top:181px;">Visualizar</div><svg style="left:688px;top:176px;" width="73" height="20" viewBox="0 0 73 20"><path d="M0 19.5L13 1.5H59L72.5 19.5" fill="#fbfbfb" stroke="#c8c8c8"/></svg><div class="t i" style="letter-spacing:0.33px;left:702px;top:181px;">Postura</div><svg style="left:617px;top:176px;" width="75" height="20" viewBox="0 0 75 20"><path d="M0 19.5L13 1.5H61L74.5 19.5" fill="#fbfbfb" stroke="#c8c8c8"/></svg><div class="t i" style="letter-spacing:0.25px;left:632px;top:181px;">Entrega</div><svg style="left:543px;top:176px;" width="78" height="20" viewBox="0 0 78 20"><path d="M0 19.5L13 1.5H64L77.5 19.5" fill="#fbfbfb" stroke="#c8c8c8"/></svg><div class="t i" style="letter-spacing:0.33px;left:557px;top:181px;">Serviços</div><svg style="left:455px;top:176px;" width="94" height="20" viewBox="0 0 94 20"><path d="M0 19.5L13 1.5H80L93.5 19.5" fill="#fbfbfb" stroke="#c8c8c8"/></svg><div class="t i" style="letter-spacing:0.28px;left:470px;top:181px;">Alterações</div><svg style="left:371px;top:176px;" width="90" height="20" viewBox="0 0 90 20"><path d="M0 19.5L13 1.5H76L89.5 19.5" fill="#fbfbfb" stroke="#c8c8c8"/></svg><div class="t i" style="letter-spacing:0.18px;left:386px;top:181px;">Históricos</div><svg style="left:288px;top:176px;" width="90" height="20" viewBox="0 0 90 20"><path d="M0 19.5L13 1.5H76L89.5 19.5" fill="#fbfbfb" stroke="#c8c8c8"/></svg><div class="t i b" style="letter-spacing:0.3px;left:305px;top:181px;">Cadastro</div>
<div style="left:286px;top:194px;width:868px;height:3px;background:#e9f3f8"></div>
<div class="teal" style="left:287px;top:197px;width:866px;height:23px;"></div>
<div style="left:286px;top:220px;width:868px;height:3px;background:#f0fafa"></div>
<div class="t hd" style="left:289px;top:201px;">Manutenção das Empresas</div>
<div class="t hd" style="letter-spacing:0.06px;left:515px;top:201px;">000000014</div>
<div class="t hd" style="letter-spacing:-0.11px;left:627px;top:201px;">EVANDRO C. SOUZA-EPP</div>
<div style="left:286px;top:221px;width:23px;height:484px;background:#fdfdfd"></div><svg style="left:286px;top:223px;" width="24" height="95" viewBox="0 0 24 95"><path d="M0.5 13L11 0.5H24V94.5H0.5Z" fill="#f0f0f0" stroke="#c4c4c4"/></svg><svg style="left:286px;top:317px;" width="24" height="133" viewBox="0 0 24 133"><path d="M0.5 14L13 0.5H23M0.5 14V132.5H23" fill="#f9f9f9" stroke="#c4c4c4"/></svg><div class="t b i" style="letter-spacing:0.44px;left:300px;top:291px;transform:rotate(-90deg);transform-origin:0 50%">EMPRESA</div>
<div class="t i" style="letter-spacing:0.67px;left:300px;top:422px;transform:rotate(-90deg);transform-origin:0 50%">CONTRIBUINTE</div>
<div style="left:309px;top:244px;width:1px;height:458px;background:#9c9c9c"></div>
<div style="left:310px;top:244px;width:1px;height:458px;background:#fdfdfd"></div>
<div style="left:311px;top:244px;width:1px;height:458px;background:#9c9c9c"></div>
<div class="tab" style="left:312px;top:225px;width:65px;height:18px;"></div>
<div class="t i" style="letter-spacing:0.19px;left:318px;top:228px;">Cadastro</div>
<div class="tab" style="left:380px;top:225px;width:142px;height:18px;"></div>
<div class="t i" style="letter-spacing:0.26px;left:390px;top:228px;">Orgãos Relacionados</div>
<div class="tab" style="left:525px;top:225px;width:52px;height:18px;"></div>
<div class="t i" style="letter-spacing:0.1px;left:530px;top:228px;">Cálculo</div>
<div class="tab" style="left:580px;top:225px;width:75px;height:18px;"></div>
<div class="t i" style="letter-spacing:0.23px;left:587px;top:228px;">Atividades</div>
<div class="tab" style="left:709px;top:225px;width:53px;height:18px;"></div>
<div class="t i" style="letter-spacing:0.31px;left:713px;top:228px;">Alvarás</div>
<div class="tab" style="left:765px;top:225px;width:38px;height:18px;"></div>
<div class="t i" style="letter-spacing:0.61px;left:770px;top:228px;">AIDF</div>
<div class="tab" style="left:806px;top:225px;width:74px;height:18px;"></div>
<div class="t i" style="letter-spacing:0.27px;left:813px;top:228px;">Restrições</div>
<div class="tab" style="left:883px;top:225px;width:43px;height:18px;"></div>
<div class="t i" style="letter-spacing:0.28px;left:889px;top:228px;">Geral</div>
<div class="tab" style="left:929px;top:225px;width:51px;height:18px;"></div>
<div class="t i" style="letter-spacing:0.07px;left:935px;top:228px;">Veículo</div>
<div class="tab" style="left:983px;top:225px;width:104px;height:18px;"></div>
<div class="t i" style="letter-spacing:0.2px;left:993px;top:228px;">Características</div>
<div style="left:311px;top:243px;width:841px;height:1px;background:#a8a8a8"></div>
<div style="left:656px;top:222px;width:51px;height:23px;background:#f0f0f0;border:1px solid #c0c0c0;border-bottom:none"></div>
<div class="t b i" style="letter-spacing:0.18px;left:662px;top:226px;">ISSQN</div>
<div style="left:1116px;top:225px;width:17px;height:16px;background:#cacaca"></div><svg style="left:1116px;top:225px;" width="17" height="16" viewBox="0 0 17 16"><path d="M10 4V12L6 8Z" fill="#d8d8d8"/></svg><div style="left:1133px;top:225px;width:16px;height:16px;background:#f6f6f6;border:1px solid #dadada"></div><svg style="left:1133px;top:225px;" width="16" height="16" viewBox="0 0 16 16"><path d="M6 4V12L10.5 8Z" fill="#000"/></svg><div style="left:312px;top:244px;width:840px;height:458px;background:#f0f0f0;border-right:2px solid #9a9a9a;border-bottom:2px solid #929292"></div>
<div style="left:1148px;top:244px;width:1px;height:455px;background:#fdfdfd"></div>
<div style="left:286px;top:705px;width:868px;height:1px;background:#8e8e8e"></div>
<div style="left:286px;top:706px;width:868px;height:1px;background:#fcfcfc"></div>
<div style="left:286px;top:707px;width:868px;height:1px;background:#a2a2a2"></div>
<div style="left:322px;top:247px;width:535px;height:48px;border:1px solid #f9f9f9;border-radius:2px;background:#efefef"></div>
<div style="left:322px;top:298px;width:535px;height:48px;border:1px solid #f9f9f9;border-radius:2px;background:#efefef"></div>
<div style="left:322px;top:349px;width:535px;height:48px;border:1px solid #f9f9f9;border-radius:2px;background:#efefef"></div>
<div style="left:322px;top:401px;width:364px;height:141px;border:1px solid #f9f9f9;border-radius:2px;background:#efefef"></div>
<div style="left:694px;top:401px;width:163px;height:44px;border:1px solid #f9f9f9;border-radius:2px;background:#efefef"></div>
<div style="left:694px;top:449px;width:163px;height:44px;border:1px solid #f9f9f9;border-radius:2px;background:#efefef"></div>
<div style="left:694px;top:497px;width:163px;height:46px;border:1px solid #f9f9f9;border-radius:2px;background:#efefef"></div>
<div style="left:322px;top:545px;width:364px;height:46px;border:1px solid #f9f9f9;border-radius:2px;background:#efefef"></div>
<div class="t i" style="letter-spacing:0.26px;left:330px;top:247px;">Exigibilidade do ISS</div>
<div class="in" style="left:327px;top:268px;width:292px;height:22px;"></div>
<div class="t i" style="letter-spacing:0.26px;left:331px;top:271px;">Exigível</div><svg style="left:604px;top:277px;" width="10" height="7" viewBox="0 0 10 7"><path d="M1.5 1.5 L5 5 L8.5 1.5" fill="none" stroke="#606060" stroke-width="1.1"/></svg><div class="t i" style="letter-spacing:0.26px;left:622px;top:254px;">Processo</div>
<div class="in" style="left:622px;top:268px;width:98px;height:22px;"></div>
<div class="t i" style="letter-spacing:0.03px;left:722px;top:254px;">Dt Exigibilidade</div>
<div class="in" style="left:722px;top:268px;width:102px;height:22px;"></div>
<div class="t i" style="letter-spacing:0.26px;left:729px;top:272px;">01/01/1990</div>
<div style="left:805px;top:270px;width:17px;height:19px;background:#f4f4f4;border:1px solid #fff;border-right-color:#5a5a5a;border-bottom-color:#5a5a5a;box-shadow:1px 1px 0 #a8a8a8"></div><svg style="left:808px;top:273px;" width="11" height="13" viewBox="0 0 11 13"><rect x="0" y="0" width="11" height="13" fill="#fff"/><rect x="0" y="0" width="11" height="4" fill="#1c1c8c"/><rect x="1.5" y="1.5" width="8" height="1" fill="#e8e8ff"/><path d="M1 6H10M1 8.5H10M1 11H10" stroke="#101030" stroke-width="1.3" stroke-dasharray="2 1.3"/><rect x="0" y="12" width="11" height="1" fill="#1c1c8c"/></svg><div class="t i" style="letter-spacing:-0.17px;left:829px;top:254px;">Hist.</div>
<div class="hb" style="left:828px;top:268px;width:24px;height:23px;"></div><svg style="left:831px;top:271px;" width="17" height="17" viewBox="0 0 17 17"><path d="M2 6L9 2L15.5 5.5L9 9.5Z" fill="#ececec" stroke="#9a9a9a" stroke-width=".9"/><path d="M2 6V11.5L9 15.5V9.5Z" fill="#d2d2d2" stroke="#9a9a9a" stroke-width=".9"/><path d="M15.5 5.5V11L9 15.5V9.5Z" fill="#e0e0e0" stroke="#a8a8a8" stroke-width=".9"/><path d="M2 6L9 2M4 8L10 4.5" stroke="#4a4a4a" stroke-width="1"/><circle cx="12" cy="4" r=".8" fill="#707070"/><circle cx="12.5" cy="9.5" r=".8" fill="#909090"/></svg><div class="t i" style="letter-spacing:0.08px;left:330px;top:298px;">Regime Especial</div>
<div class="in" style="left:327px;top:319px;width:393px;height:22px;"></div>
<div class="t i" style="letter-spacing:0.25px;left:331px;top:322px;">Microempresário (ME)</div><svg style="left:706px;top:328px;" width="10" height="7" viewBox="0 0 10 7"><path d="M1.5 1.5 L5 5 L8.5 1.5" fill="none" stroke="#606060" stroke-width="1.1"/></svg><div class="t i" style="letter-spacing:0.18px;left:722px;top:305px;">Dt Inicio</div>
<div class="in" style="left:722px;top:319px;width:102px;height:22px;"></div>
<div class="t i" style="letter-spacing:0.26px;left:729px;top:324px;">01/04/2025</div>
<div style="left:805px;top:321px;width:17px;height:19px;background:#f4f4f4;border:1px solid #fff;border-right-color:#5a5a5a;border-bottom-color:#5a5a5a;box-shadow:1px 1px 0 #a8a8a8"></div><svg style="left:808px;top:324px;" width="11" height="13" viewBox="0 0 11 13"><rect x="0" y="0" width="11" height="13" fill="#fff"/><rect x="0" y="0" width="11" height="4" fill="#1c1c8c"/><rect x="1.5" y="1.5" width="8" height="1" fill="#e8e8ff"/><path d="M1 6H10M1 8.5H10M1 11H10" stroke="#101030" stroke-width="1.3" stroke-dasharray="2 1.3"/><rect x="0" y="12" width="11" height="1" fill="#1c1c8c"/></svg><div class="t i" style="letter-spacing:-0.17px;left:829px;top:305px;">Hist.</div>
<div class="hb" style="left:828px;top:319px;width:24px;height:23px;"></div><svg style="left:831px;top:322px;" width="17" height="17" viewBox="0 0 17 17"><path d="M2 6L9 2L15.5 5.5L9 9.5Z" fill="#ececec" stroke="#9a9a9a" stroke-width=".9"/><path d="M2 6V11.5L9 15.5V9.5Z" fill="#d2d2d2" stroke="#9a9a9a" stroke-width=".9"/><path d="M15.5 5.5V11L9 15.5V9.5Z" fill="#e0e0e0" stroke="#a8a8a8" stroke-width=".9"/><path d="M2 6L9 2M4 8L10 4.5" stroke="#4a4a4a" stroke-width="1"/><circle cx="12" cy="4" r=".8" fill="#707070"/><circle cx="12.5" cy="9.5" r=".8" fill="#909090"/></svg><div class="t i" style="letter-spacing:0.33px;left:330px;top:349px;">Tipo ISSQN</div>
<div class="in" style="left:327px;top:370px;width:393px;height:22px;"></div>
<div class="t i" style="letter-spacing:0.25px;left:331px;top:373px;">03 - Sobre Faturamento</div><svg style="left:706px;top:379px;" width="10" height="7" viewBox="0 0 10 7"><path d="M1.5 1.5 L5 5 L8.5 1.5" fill="none" stroke="#606060" stroke-width="1.1"/></svg><div class="t i" style="letter-spacing:0.18px;left:722px;top:356px;">Dt Inicio</div>
<div class="in" style="left:722px;top:370px;width:102px;height:22px;"></div>
<div class="t i" style="letter-spacing:0.26px;left:729px;top:374px;">01/04/2025</div>
<div style="left:805px;top:372px;width:17px;height:19px;background:#f4f4f4;border:1px solid #fff;border-right-color:#5a5a5a;border-bottom-color:#5a5a5a;box-shadow:1px 1px 0 #a8a8a8"></div><svg style="left:808px;top:375px;" width="11" height="13" viewBox="0 0 11 13"><rect x="0" y="0" width="11" height="13" fill="#fff"/><rect x="0" y="0" width="11" height="4" fill="#1c1c8c"/><rect x="1.5" y="1.5" width="8" height="1" fill="#e8e8ff"/><path d="M1 6H10M1 8.5H10M1 11H10" stroke="#101030" stroke-width="1.3" stroke-dasharray="2 1.3"/><rect x="0" y="12" width="11" height="1" fill="#1c1c8c"/></svg><div class="t i" style="letter-spacing:-0.17px;left:829px;top:356px;">Hist.</div>
<div class="hb" style="left:828px;top:370px;width:24px;height:23px;"></div><svg style="left:831px;top:373px;" width="17" height="17" viewBox="0 0 17 17"><path d="M2 6L9 2L15.5 5.5L9 9.5Z" fill="#ececec" stroke="#9a9a9a" stroke-width=".9"/><path d="M2 6V11.5L9 15.5V9.5Z" fill="#d2d2d2" stroke="#9a9a9a" stroke-width=".9"/><path d="M15.5 5.5V11L9 15.5V9.5Z" fill="#e0e0e0" stroke="#a8a8a8" stroke-width=".9"/><path d="M2 6L9 2M4 8L10 4.5" stroke="#4a4a4a" stroke-width="1"/><circle cx="12" cy="4" r=".8" fill="#707070"/><circle cx="12.5" cy="9.5" r=".8" fill="#909090"/></svg><div class="t i" style="letter-spacing:0.1px;left:330px;top:401px;">Simples Nacional</div>
<div class="t i" style="letter-spacing:0.05px;left:329px;top:417px;">Optante?</div>
<div class="ing" style="left:329px;top:432px;width:89px;height:21px;"></div>
<div class="t i" style="letter-spacing:0.1px;left:333px;top:436px;">Não</div><svg style="left:403px;top:440px;" width="10" height="7" viewBox="0 0 10 7"><path d="M1.5 1.5 L5 5 L8.5 1.5" fill="none" stroke="#404040" stroke-width="1.1"/></svg><div class="t i" style="letter-spacing:0.14px;left:423px;top:417px;">Data da Opção</div>
<div class="in" style="left:422px;top:432px;width:101px;height:21px;"></div>
<div class="t i" style="letter-spacing:0.26px;left:428px;top:436px;">01/01/1990</div>
<div style="left:504px;top:433px;width:17px;height:19px;background:#f4f4f4;border:1px solid #fff;border-right-color:#5a5a5a;border-bottom-color:#5a5a5a;box-shadow:1px 1px 0 #a8a8a8"></div><svg style="left:507px;top:436px;" width="11" height="13" viewBox="0 0 11 13"><rect x="0" y="0" width="11" height="13" fill="#fff"/><rect x="0" y="0" width="11" height="4" fill="#1c1c8c"/><rect x="1.5" y="1.5" width="8" height="1" fill="#e8e8ff"/><path d="M1 6H10M1 8.5H10M1 11H10" stroke="#101030" stroke-width="1.3" stroke-dasharray="2 1.3"/><rect x="0" y="12" width="11" height="1" fill="#1c1c8c"/></svg><div class="t i" style="letter-spacing:-0.17px;left:528px;top:417px;">Hist.</div>
<div class="hb" style="left:528px;top:430px;width:24px;height:24px;"></div><svg style="left:531px;top:433px;" width="17" height="17" viewBox="0 0 17 17"><path d="M2 6L9 2L15.5 5.5L9 9.5Z" fill="#ececec" stroke="#9a9a9a" stroke-width=".9"/><path d="M2 6V11.5L9 15.5V9.5Z" fill="#d2d2d2" stroke="#9a9a9a" stroke-width=".9"/><path d="M15.5 5.5V11L9 15.5V9.5Z" fill="#e0e0e0" stroke="#a8a8a8" stroke-width=".9"/><path d="M2 6L9 2M4 8L10 4.5" stroke="#4a4a4a" stroke-width="1"/><circle cx="12" cy="4" r=".8" fill="#707070"/><circle cx="12.5" cy="9.5" r=".8" fill="#909090"/></svg><div style="left:562px;top:412px;width:1px;height:46px;background:#6a6a6a"></div>
<div style="left:563px;top:412px;width:1px;height:46px;background:#fdfdfd"></div>
<div class="t i" style="letter-spacing:0.08px;left:571px;top:417px;">Alíquota</div>
<div style="left:567px;top:432px;width:51px;height:21px;background:#f0f0f0;border:1px solid #dcdcdc;box-shadow:inset 1px 1px 0 #fafafa"></div>
<div class="hb" style="left:621px;top:430px;width:25px;height:24px;"></div><svg style="left:624px;top:433px;" width="19" height="19" viewBox="0 0 19 19"><circle cx="9.5" cy="9.5" r="8" fill="#3cb44a" stroke="#a8e0a8" stroke-width="1.5"/><path d="M9.5 5V14M5 9.5H14" stroke="#e8ffe8" stroke-width="2.4"/></svg><div class="t i" style="letter-spacing:-0.17px;left:650px;top:417px;">Hist.</div>
<div class="hb" style="left:648px;top:430px;width:25px;height:24px;"></div><svg style="left:652px;top:433px;" width="17" height="17" viewBox="0 0 17 17"><path d="M2 6L9 2L15.5 5.5L9 9.5Z" fill="#ececec" stroke="#9a9a9a" stroke-width=".9"/><path d="M2 6V11.5L9 15.5V9.5Z" fill="#d2d2d2" stroke="#9a9a9a" stroke-width=".9"/><path d="M15.5 5.5V11L9 15.5V9.5Z" fill="#e0e0e0" stroke="#a8a8a8" stroke-width=".9"/><path d="M2 6L9 2M4 8L10 4.5" stroke="#4a4a4a" stroke-width="1"/><circle cx="12" cy="4" r=".8" fill="#707070"/><circle cx="12.5" cy="9.5" r=".8" fill="#909090"/></svg><div class="t i" style="letter-spacing:0.14px;left:328px;top:458px;">Aplicação da Alíquota</div>
<div class="ind" style="left:329px;top:474px;width:214px;height:21px;"></div>
<div class="t i" style="letter-spacing:0.07px;left:549px;top:458px;">Dt Competencia</div>
<div style="left:544px;top:474px;width:103px;height:21px;background:#f2f2f2;border:1px solid #e4e4e4"></div>
<div class="t i" style="letter-spacing:0.26px;left:551px;top:478px;color:#8a8a8a">16/04/2018</div>
<div style="left:628px;top:475px;width:17px;height:19px;background:#f4f4f4;border:1px solid #fff;border-right-color:#5a5a5a;border-bottom-color:#5a5a5a;box-shadow:1px 1px 0 #a8a8a8"></div><svg style="left:631px;top:478px;" width="11" height="13" viewBox="0 0 11 13"><rect x="0" y="0" width="11" height="13" fill="#fff"/><rect x="0" y="0" width="11" height="4" fill="#1c1c8c"/><rect x="1.5" y="1.5" width="8" height="1" fill="#e8e8ff"/><path d="M1 6H10M1 8.5H10M1 11H10" stroke="#101030" stroke-width="1.3" stroke-dasharray="2 1.3"/><rect x="0" y="12" width="11" height="1" fill="#1c1c8c"/></svg><div class="t i" style="letter-spacing:-0.17px;left:650px;top:458px;">Hist.</div>
<div class="hb" style="left:648px;top:472px;width:25px;height:24px;"></div><svg style="left:652px;top:475px;" width="17" height="17" viewBox="0 0 17 17"><path d="M2 6L9 2L15.5 5.5L9 9.5Z" fill="#ececec" stroke="#9a9a9a" stroke-width=".9"/><path d="M2 6V11.5L9 15.5V9.5Z" fill="#d2d2d2" stroke="#9a9a9a" stroke-width=".9"/><path d="M15.5 5.5V11L9 15.5V9.5Z" fill="#e0e0e0" stroke="#a8a8a8" stroke-width=".9"/><path d="M2 6L9 2M4 8L10 4.5" stroke="#4a4a4a" stroke-width="1"/><circle cx="12" cy="4" r=".8" fill="#707070"/><circle cx="12.5" cy="9.5" r=".8" fill="#909090"/></svg><div class="t i" style="letter-spacing:0.21px;left:330px;top:500px;">Tipo Declaração de Prest. Serviço</div>
<div class="ing" style="left:329px;top:517px;width:352px;height:21px;"></div><svg style="left:666px;top:525px;" width="10" height="7" viewBox="0 0 10 7"><path d="M1.5 1.5 L5 5 L8.5 1.5" fill="none" stroke="#505050" stroke-width="1.1"/></svg><div class="t i" style="letter-spacing:0.1px;left:330px;top:545px;">Instituição Financeira</div>
<div class="ing" style="left:329px;top:564px;width:59px;height:21px;"></div><svg style="left:373px;top:572px;" width="10" height="7" viewBox="0 0 10 7"><path d="M1.5 1.5 L5 5 L8.5 1.5" fill="none" stroke="#404040" stroke-width="1.1"/></svg><div class="in" style="left:394px;top:564px;width:29px;height:21px;"></div>
<div class="hb" style="left:426px;top:563px;width:21px;height:22px;"></div><svg style="left:428px;top:565px;" width="17" height="18" viewBox="0 0 17 18"><circle cx="10" cy="6.5" r="4.6" fill="#dbe8fa" stroke="#3a6ab8" stroke-width="1.6"/><path d="M6.5 10L1.5 16" stroke="#6a6a6a" stroke-width="2.4"/></svg><div class="inf" style="left:449px;top:564px;width:231px;height:21px;"></div>
<div class="t i" style="letter-spacing:0.22px;left:703px;top:401px;">Permite RPS</div>
<div class="ing" style="left:701px;top:417px;width:152px;height:21px;"></div>
<div class="t i" style="letter-spacing:0.08px;left:705px;top:420px;">Sim</div><svg style="left:838px;top:425px;" width="10" height="7" viewBox="0 0 10 7"><path d="M1.5 1.5 L5 5 L8.5 1.5" fill="none" stroke="#404040" stroke-width="1.1"/></svg><div class="t i" style="letter-spacing:0.13px;left:703px;top:449px;">Declaração Prestador</div>
<div class="ing" style="left:701px;top:467px;width:152px;height:21px;"></div>
<div class="t i" style="letter-spacing:0.13px;left:705px;top:470px;">Não Declara</div><svg style="left:838px;top:475px;" width="10" height="7" viewBox="0 0 10 7"><path d="M1.5 1.5 L5 5 L8.5 1.5" fill="none" stroke="#404040" stroke-width="1.1"/></svg><div class="t i" style="letter-spacing:0.27px;left:703px;top:497px;">Declaração Tomador</div>
<div class="ing" style="left:701px;top:516px;width:152px;height:21px;"></div><svg style="left:838px;top:524px;" width="10" height="7" viewBox="0 0 10 7"><path d="M1.5 1.5 L5 5 L8.5 1.5" fill="none" stroke="#404040" stroke-width="1.1"/></svg><div style="left:319px;top:598px;width:12px;height:12px;background:#1a7a1a;border:1px solid #0a4a0a"></div><svg style="left:319px;top:598px;" width="12" height="12" viewBox="0 0 12 12"><path d="M2.5 6L5 8.8L9.7 3" fill="none" stroke="#fff" stroke-width="1.7"/></svg><div class="t i" style="letter-spacing:-0.01px;left:338px;top:597px;">Utiliza NFE</div>
<div style="left:319px;top:611px;width:12px;height:12px;border:1px solid #d4d4d4;border-right-color:#f6f6f6;border-bottom-color:#f6f6f6;background:#f3f3f3"></div>
<div class="t i" style="letter-spacing:0.23px;left:338px;top:611px;">Permite Emissão de NFS-e sem tomador</div>
<div style="left:319px;top:627px;width:12px;height:12px;border:1px solid #d4d4d4;border-right-color:#f6f6f6;border-bottom-color:#f6f6f6;background:#f3f3f3"></div>
<div class="t i" style="letter-spacing:0.24px;left:338px;top:627px;">Não Permite Emissão de NFe com CNPJ/CPF inválido</div>
<div style="left:319px;top:643px;width:12px;height:12px;border:1px solid #d4d4d4;border-right-color:#f6f6f6;border-bottom-color:#f6f6f6;background:#f3f3f3"></div>
<div class="t i" style="letter-spacing:0.19px;left:338px;top:643px;">Permite Alterar a Exigibilidade do ISSQN na Emissão da Nota Fiscal Eletrônica</div>
<div style="left:319px;top:659px;width:12px;height:12px;border:1px solid #d4d4d4;border-right-color:#f6f6f6;border-bottom-color:#f6f6f6;background:#f3f3f3"></div>
<div class="t i" style="letter-spacing:0.18px;left:338px;top:659px;">Permite Alterar o Município de Incidência do ISSQN na Emissão da Nota Fiscal Eletrônica</div>
<div style="left:319px;top:675px;width:12px;height:12px;border:1px solid #d4d4d4;border-right-color:#f6f6f6;border-bottom-color:#f6f6f6;background:#f3f3f3"></div>
<div class="t i" style="letter-spacing:0.18px;left:338px;top:675px;">Sempre considerar local da prestação como local de incidência</div>
<div class="nb" style="left:289px;top:711px;width:33px;height:29px;"></div><svg style="left:295px;top:717px;" width="26" height="21.7" viewBox="0 0 24 20"><rect x="1.5" y="1.5" width="20" height="14" fill="#e8e8e8" stroke="#5a5a5a"/><rect x="6" y="4" width="5" height="6" fill="#c8c8c8"/><path d="M13 5H19M13 8H19" stroke="#9a9a9a"/><rect x="0.5" y="10.5" width="8" height="8" fill="#f4f4f4" stroke="#3a3a3a"/><path d="M2 12H6L2 16Z M3 13L7 17" fill="#222" stroke="#222"/></svg><div class="nb" style="left:327px;top:711px;width:33px;height:29px;"></div><svg style="left:333px;top:717px;" width="26" height="21.7" viewBox="0 0 24 20"><rect x="1.5" y="1.5" width="20" height="14" fill="#e8e8e8" stroke="#5a5a5a"/><rect x="6" y="4" width="5" height="6" fill="#c8c8c8"/><path d="M13 5H19M13 8H19" stroke="#9a9a9a"/><rect x="0.5" y="10.5" width="8" height="8" fill="#f4f4f4" stroke="#3a3a3a"/><path d="M7 14.5H2M4 12L1.5 14.5L4 17" fill="none" stroke="#222" stroke-width="1.4"/></svg><div class="nb" style="left:366px;top:711px;width:33px;height:29px;"></div><svg style="left:372px;top:717px;" width="26" height="21.7" viewBox="0 0 24 20"><rect x="1.5" y="1.5" width="20" height="14" fill="#e8e8e8" stroke="#5a5a5a"/><rect x="6" y="4" width="5" height="6" fill="#c8c8c8"/><path d="M13 5H19M13 8H19" stroke="#9a9a9a"/><rect x="14.5" y="10.5" width="8" height="8" fill="#f4f4f4" stroke="#3a3a3a"/><path d="M16 14.5H21M19 12L21.5 14.5L19 17" fill="none" stroke="#222" stroke-width="1.4"/></svg><div class="nb" style="left:405px;top:711px;width:33px;height:29px;"></div><svg style="left:411px;top:717px;" width="26" height="21.7" viewBox="0 0 24 20"><rect x="1.5" y="1.5" width="20" height="14" fill="#e8e8e8" stroke="#5a5a5a"/><rect x="6" y="4" width="5" height="6" fill="#c8c8c8"/><path d="M13 5H19M13 8H19" stroke="#9a9a9a"/><rect x="14.5" y="10.5" width="8" height="8" fill="#f4f4f4" stroke="#3a3a3a"/><path d="M21 12H17L21 16Z M20 13L16 17" fill="#222" stroke="#222"/></svg><div style="left:841px;top:711px;width:96px;height:29px;background:#e1e1e1;border:2px solid #0078d7"></div>
<div style="left:844px;top:714px;width:90px;height:23px;border:1px dotted #000"></div>
<div class="t cb" style="letter-spacing:0.08px;left:879px;top:719px;">Confirma</div><svg style="left:847px;top:715px;" width="26" height="22" viewBox="0 0 26 22"><rect x="1.5" y="1.5" width="21" height="15" fill="#dfeaf6" stroke="#3a5a8a"/><rect x="3" y="3" width="18" height="3" fill="#5a8ad0"/><path d="M5 9H10M5 12H10" stroke="#8aa0c0"/><path d="M3 14L9 20.5L21 9.5L18.5 7.5L9 16L6 12Z" fill="#3cb43c" stroke="#1e7a1e" stroke-width=".7"/></svg><div style="left:943px;top:711px;width:97px;height:29px;background:#e1e1e1;border:1px solid #adadad"></div>
<div class="t cb" style="letter-spacing:0.05px;left:985px;top:719px;">Cancela</div><svg style="left:949px;top:715px;" width="28" height="23" viewBox="0 0 28 23"><rect x="1.5" y="1.5" width="21" height="15" fill="#dfeaf6" stroke="#3a5a8a"/><rect x="3" y="3" width="18" height="3" fill="#5a8ad0"/><path d="M5 9H10M5 12H10" stroke="#8aa0c0"/><path d="M10 9.5L21 20.5M21 9.5L10 20.5" stroke="#e01818" stroke-width="3.2" stroke-linecap="round"/></svg><div style="left:1053px;top:711px;width:98px;height:29px;background:#cdcdcd;border:1px solid #d8d8d8"></div>
<div class="t cb tl" style="letter-spacing:-0.27px;left:1108px;top:719px;">Sair</div><svg style="left:1061px;top:715px;" width="28" height="23" viewBox="0 0 28 23"><rect x="1.5" y="1.5" width="21" height="15" fill="#e6e6e6" stroke="#7a7a7a"/><rect x="3" y="3" width="18" height="3" fill="#bcbcbc"/><path d="M10 12H20V9L26 14L20 19V16H10Z" fill="#c8c8c8" stroke="#8a8a8a" stroke-width=".7"/></svg><div style="left:1435px;top:860px;width:1px;height:40px;background:#55605f"></div>
</body>
</html>
